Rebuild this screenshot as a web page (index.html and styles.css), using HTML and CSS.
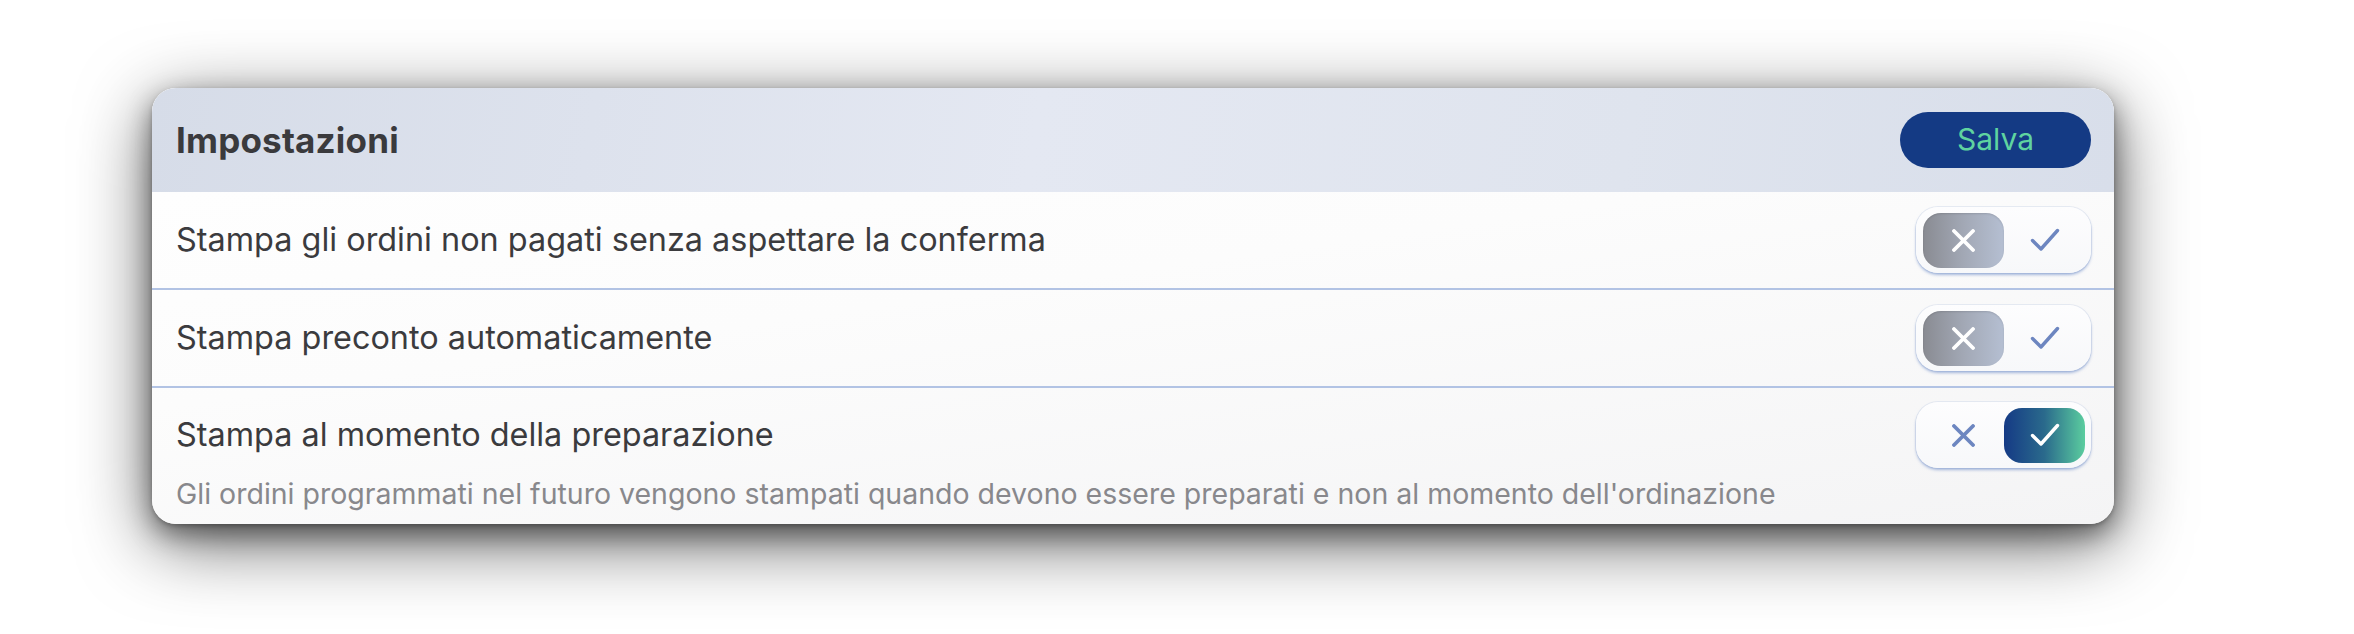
FILE: index.html
```html
<!DOCTYPE html>
<html lang="it">
<head>
<meta charset="utf-8">
<title>Impostazioni</title>
<link rel="stylesheet" href="styles.css">
</head>
<body>
<section class="card">
  <header class="card-header">
    <h1 class="title">Impostazioni</h1>
    <button class="save-btn" type="button">Salva</button>
  </header>

  <div class="row">
    <div class="row-main">
      <span class="row-label">Stampa gli ordini non pagati senza aspettare la conferma</span>
      <div class="toggle">
        <span class="seg seg-off is-active">
          <svg class="ico ico-x" viewBox="0 0 23 23"><path d="M2 2L21 21M21 2L2 21"/></svg>
        </span>
        <span class="seg seg-on">
          <svg class="ico ico-check" viewBox="0 0 30 24"><path d="M2.5 12.5L11 21L27.5 2.5"/></svg>
        </span>
      </div>
    </div>
  </div>

  <div class="row">
    <div class="row-main">
      <span class="row-label">Stampa preconto automaticamente</span>
      <div class="toggle">
        <span class="seg seg-off is-active">
          <svg class="ico ico-x" viewBox="0 0 23 23"><path d="M2 2L21 21M21 2L2 21"/></svg>
        </span>
        <span class="seg seg-on">
          <svg class="ico ico-check" viewBox="0 0 30 24"><path d="M2.5 12.5L11 21L27.5 2.5"/></svg>
        </span>
      </div>
    </div>
  </div>

  <div class="row row-last">
    <div class="row-main row-main-top">
      <span class="row-label">Stampa al momento della preparazione</span>
      <div class="toggle">
        <span class="seg seg-off">
          <svg class="ico ico-x" viewBox="0 0 23 23"><path d="M2 2L21 21M21 2L2 21"/></svg>
        </span>
        <span class="seg seg-on is-active">
          <svg class="ico ico-check" viewBox="0 0 30 24"><path d="M2.5 12.5L11 21L27.5 2.5"/></svg>
        </span>
      </div>
    </div>
    <p class="row-desc">Gli ordini programmati nel futuro vengono stampati quando devono essere preparati e non al momento dell'ordinazione</p>
  </div>
</section>
</body>
</html>
```
FILE: styles.css
```css
* { box-sizing: border-box; }

html, body {
  margin: 0;
  padding: 0;
  background: #ffffff;
}

html {
  height: 100%;
}

body {
  min-height: 634px;
  padding: 88px 0 0 152px;
  font-family: "Inter", "Noto Sans", sans-serif;
  color: #3c3c3f;
}

.card {
  width: 1962px;
  border-radius: 24px;
  overflow: hidden;
  background: linear-gradient(172deg, #ffffff 0%, #fcfcfc 45%, #f4f4f5 100%);
  box-shadow:
    0 18px 72px rgba(0, 0, 0, 0.62),
    0 10px 26px rgba(0, 0, 0, 0.42),
    0 2px 4px rgba(0, 0, 0, 0.22);
}

.card-header {
  height: 104px;
  display: flex;
  align-items: center;
  justify-content: space-between;
  padding: 0 23px 0 24px;
  background: linear-gradient(100deg, #d6dce8 0%, #e4e8f2 45%, #dfe4ee 75%, #d8deea 100%);
}

.title {
  margin: 0;
  font-size: 35px;
  font-weight: 700;
  color: #3a3a3d;
  letter-spacing: 0.2px;
}

.save-btn {
  width: 191px;
  height: 56px;
  border: none;
  border-radius: 28px;
  background: #143a84;
  color: #5fd4a0;
  font-family: "Inter", "Noto Sans", sans-serif;
  font-size: 30px;
  font-weight: 400;
  padding: 0 0 2px;
  cursor: pointer;
}

.row {
  border-top: 2px solid #b2c3e4;
  padding: 0 23px 0 24px;
}

.card-header + .row {
  border-top: none;
}

.row-main {
  height: 96px;
  display: flex;
  align-items: center;
  justify-content: space-between;
}

.row-last .row-main-top {
  height: auto;
  padding-top: 14px;
}

.row-label {
  font-size: 32.4px;
  line-height: 40px;
  color: #3b3b3e;
}

.row-desc {
  margin: 9px 0 0;
  padding-bottom: 13px;
  font-size: 28.5px;
  line-height: 34px;
  color: #88888c;
}

.toggle {
  width: 175px;
  height: 66px;
  display: flex;
  align-items: center;
  padding: 0 6px 0 7px;
  border-radius: 22px;
  background: linear-gradient(180deg, #fdfdfe 0%, #f7f8fa 100%);
  box-shadow: 0 2px 3px rgba(110, 140, 200, 0.6), 0 0 0 1px rgba(205, 214, 232, 0.4);
}

.seg {
  width: 81px;
  height: 55px;
  display: flex;
  align-items: center;
  justify-content: center;
  border-radius: 18px;
  color: #6d86c0;
}

.ico {
  display: block;
  fill: none;
  stroke: currentColor;
  stroke-linecap: round;
  stroke-linejoin: round;
}

.ico-x {
  width: 23px;
  height: 23px;
  stroke-width: 3.8;
}

.ico-check {
  width: 30px;
  height: 24px;
  stroke-width: 3.4;
}

.seg-off.is-active {
  background: linear-gradient(90deg, #898b92 0%, #a2a8b5 50%, #b5bfd2 100%);
  color: #ffffff;
  box-shadow: inset 0 1px 2px rgba(0, 0, 0, 0.12);
}

.seg-on.is-active {
  background: linear-gradient(90deg, #153a85 0%, #2a6a8c 50%, #5bcd9f 100%);
  color: #ffffff;
}
```
